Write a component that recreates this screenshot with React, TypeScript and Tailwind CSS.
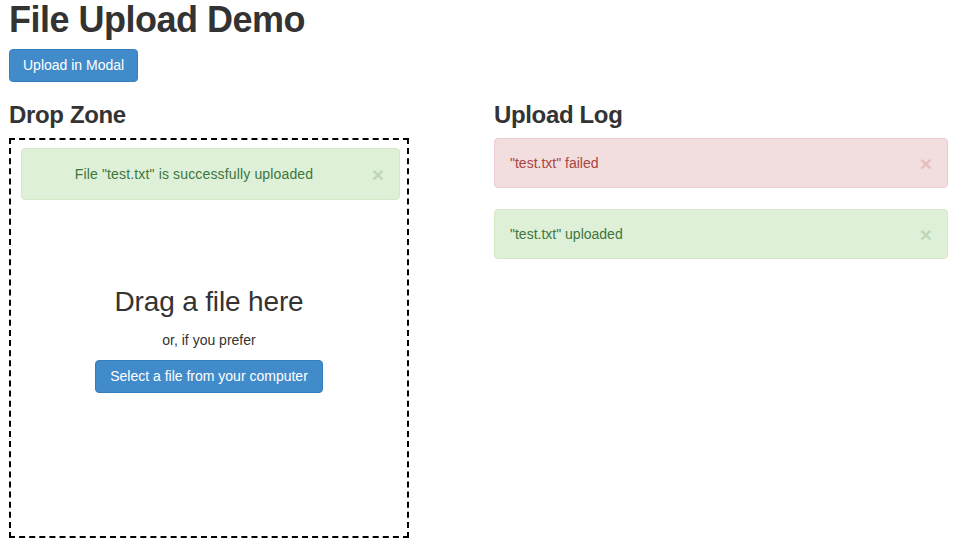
import React from "react";

const font = { fontFamily: '"Liberation Sans", Arial, Helvetica, sans-serif' };

function Close({ className }: { className: string }) {
  return (
    <span className={`text-[21px] font-bold leading-none opacity-20 ${className}`}>×</span>
  );
}

export default function App() {
  return (
    <div style={font} className="min-h-[553px] w-[957px] bg-white px-[9px] text-[14px] text-[#333]">
      <h1 className="m-0 h-[40px] text-[36px] font-bold leading-[40px] tracking-[-0.5px]">File Upload Demo</h1>
      <button className="mt-[9px] flex h-[33px] items-center rounded-[4px] border border-[#357ebd] bg-[#428bca] px-[13px] text-[14px] text-white">
        Upload in Modal
      </button>
      <div className="mt-[20px] grid grid-cols-2 gap-[31px]">
        <div>
          <h3 className="mb-[10px] h-[26px] text-[24px] font-bold leading-[26px] tracking-[-0.35px]">Drop Zone</h3>
          <div className="flex h-[400px] w-[400px] flex-col border-2 border-dashed border-black pl-[10px] pr-[7px] pt-[8px]">
            <div className="relative flex h-[52px] items-center rounded-[4px] border border-[#d6e9c6] bg-[#dff0d8] pl-[15px] pr-[48px] text-[#3c763d]">
              <div className="flex-1 text-center tracking-[0.15px]">File "test.txt" is successfully uploaded</div>
              <Close className="absolute right-[15px] top-[15px]" />
            </div>
            <div className="ml-[-10px] mr-[-7px] mt-[86px] flex flex-col items-center">
              <div className="text-[28px] leading-[32px] tracking-[-0.15px]">Drag a file here</div>
              <div className="mt-[12px] text-[14px] leading-[20px]">or, if you prefer</div>
              <button className="mt-[10px] flex h-[33px] items-center rounded-[4px] border border-[#357ebd] bg-[#428bca] px-[14px] text-[14px] text-white">
                Select a file from your computer
              </button>
            </div>
          </div>
        </div>
        <div>
          <h3 className="mb-[10px] h-[26px] text-[24px] font-bold leading-[26px] tracking-[-0.35px]">Upload Log</h3>
          <div className="flex flex-col gap-[21px]">
            <div className="relative flex h-[50px] items-center rounded-[4px] border border-[#ebccd1] bg-[#f2dede] px-[15px] text-[#a94442]">
              <span>"test.txt" failed</span>
              <Close className="absolute right-[15px] top-[14px]" />
            </div>
            <div className="relative flex h-[50px] items-center rounded-[4px] border border-[#d6e9c6] bg-[#dff0d8] px-[15px] text-[#3c763d]">
              <span>"test.txt" uploaded</span>
              <Close className="absolute right-[15px] top-[14px]" />
            </div>
          </div>
        </div>
      </div>
    </div>
  );
}
